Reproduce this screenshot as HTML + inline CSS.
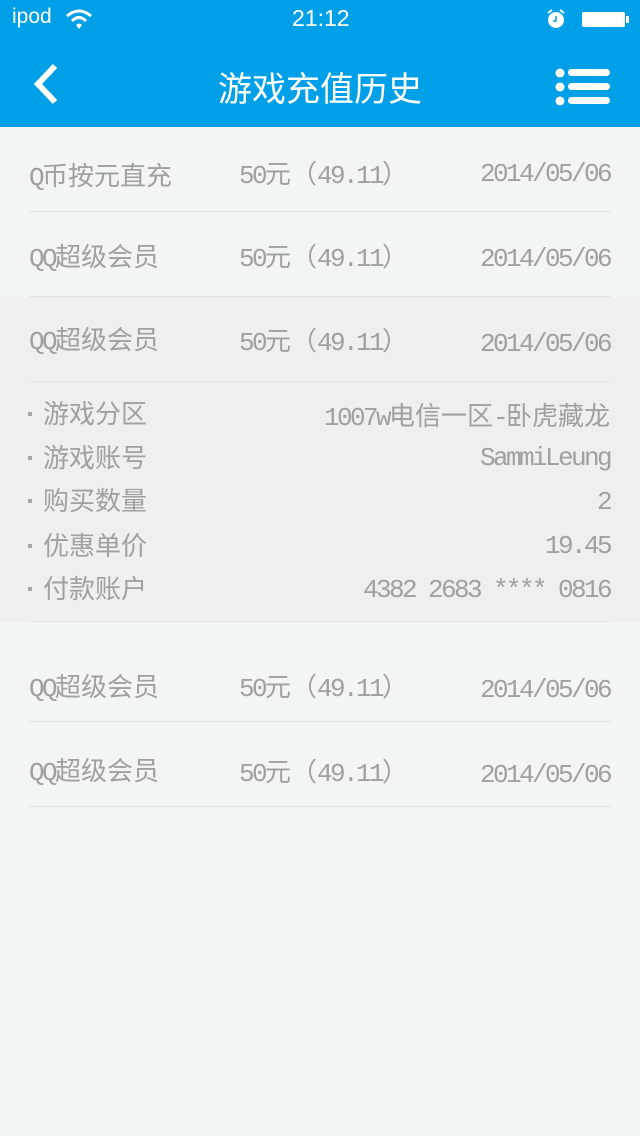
<!DOCTYPE html>
<html><head><meta charset="utf-8"><style>
*{margin:0;padding:0;box-sizing:border-box}
body{width:640px;height:1136px;background:#f1f5f6;font-family:"Noto Sans CJK SC","Liberation Sans",sans-serif;color:#a0a0a0;position:relative;overflow:hidden}
.hdr{position:absolute;left:0;top:0;width:640px;height:127px;background:#00a0e9;color:#fff}
.a{position:absolute;white-space:nowrap}
.line{position:absolute;left:29px;width:582px;height:1px;background:#e0e3e4}
.t{font-size:26px;line-height:32px}
.m{font-family:"Liberation Mono",monospace;font-size:26px;letter-spacing:-2.6px}
.r{text-align:right;right:30px}
.exp{position:absolute;left:0;top:297px;width:640px;height:325px;background:#efefef}
.d{position:absolute;left:28px;width:4px;height:4px;background:#a8a8a8}
</style></head><body>
<div class="hdr">
<div class="a" style="left:12px;top:5px;font-size:21px;font-family:'Liberation Sans'">ipod</div>
<svg class="a" style="left:64px;top:8px" width="30" height="22" viewBox="0 0 30 22"><path d="M3 8 Q15 -2 27 8" stroke="#fff" stroke-width="3" fill="none"/><path d="M8 13 Q15 6 22 13" stroke="#fff" stroke-width="3" fill="none"/><path d="M12 17 L15 21 L18 17 Q15 14 12 17Z" fill="#fff"/></svg>
<div class="a" style="left:292px;top:5px;font-size:23px;font-family:'Liberation Sans'">21:12</div>
<svg class="a" style="left:545px;top:8px" width="22" height="22"><circle cx="11" cy="12" r="8" fill="#fff"/><path d="M11 8v5h-3" stroke="#00a0e9" stroke-width="1.5" fill="none"/><path d="M3 5l4-3M19 5l-4-3" stroke="#fff" stroke-width="2"/></svg>
<div class="a" style="left:582px;top:12px;width:43px;height:15px;background:#fff;border-radius:2px"></div>
<div class="a" style="left:626px;top:16px;width:3px;height:7px;background:#fff"></div>
<svg class="a" style="left:28px;top:62px" width="34" height="44"><path d="M27 4 L10 22 L27 40" stroke="#fff" stroke-width="6" fill="none"/></svg>
<div class="a" style="left:0;width:640px;text-align:center;top:62px;font-size:34px">游戏充值历史</div>
<svg class="a" style="left:554px;top:68px" width="56" height="38"><circle cx="6" cy="5" r="4.5" fill="#fff"/><circle cx="6" cy="19" r="4.5" fill="#fff"/><circle cx="6" cy="33" r="4.5" fill="#fff"/><rect x="14" y="1" width="42" height="7" rx="3.5" fill="#fff"/><rect x="14" y="15" width="42" height="7" rx="3.5" fill="#fff"/><rect x="14" y="29" width="42" height="7" rx="3.5" fill="#fff"/></svg>
</div>
<div class="exp"></div>

<div class="a t" style="left:29px;top:159px"><span class="m">Q</span>币按元直充</div><div class="a t" style="left:239px;top:157px"><span class="m">50</span>元（<span class="m">49.11</span>）</div><div class="a t r" style="top:155px"><span class="m">2014/05/06</span></div>
<div class="line" style="top:211px"></div>
<div class="a t" style="left:29px;top:240px"><span class="m">QQ</span>超级会员</div><div class="a t" style="left:239px;top:240px"><span class="m">50</span>元（<span class="m">49.11</span>）</div><div class="a t r" style="top:240px"><span class="m">2014/05/06</span></div>
<div class="line" style="top:296px"></div>
<div class="a t" style="left:29px;top:323px"><span class="m">QQ</span>超级会员</div><div class="a t" style="left:239px;top:324px"><span class="m">50</span>元（<span class="m">49.11</span>）</div><div class="a t r" style="top:325px"><span class="m">2014/05/06</span></div>
<div class="line" style="top:381px"></div>

<div class="d" style="top:412px"></div><div class="a t" style="left:43px;top:397px">游戏分区</div><div class="a t r" style="top:399px"><span class="m">1007w</span>电信一区<span class="m">-</span>卧虎藏龙</div>
<div class="d" style="top:456px"></div><div class="a t" style="left:43px;top:441px">游戏账号</div><div class="a t r" style="top:439px"><span class="m">SammiLeung</span></div>
<div class="d" style="top:499px"></div><div class="a t" style="left:43px;top:484px">购买数量</div><div class="a t r" style="top:483px"><span class="m">2</span></div>
<div class="d" style="top:544px"></div><div class="a t" style="left:43px;top:529px">优惠单价</div><div class="a t r" style="top:527px"><span class="m">19.45</span></div>
<div class="d" style="top:587px"></div><div class="a t" style="left:43px;top:572px">付款账户</div><div class="a t r" style="top:571px"><span class="m">4382 2683 **** 0816</span></div>
<div class="line" style="top:621px"></div>

<div class="a t" style="left:29px;top:670px"><span class="m">QQ</span>超级会员</div><div class="a t" style="left:239px;top:670px"><span class="m">50</span>元（<span class="m">49.11</span>）</div><div class="a t r" style="top:671px"><span class="m">2014/05/06</span></div>
<div class="line" style="top:721px"></div>
<div class="a t" style="left:29px;top:754px"><span class="m">QQ</span>超级会员</div><div class="a t" style="left:239px;top:755px"><span class="m">50</span>元（<span class="m">49.11</span>）</div><div class="a t r" style="top:756px"><span class="m">2014/05/06</span></div>
<div class="line" style="top:806px"></div>
</body></html>
